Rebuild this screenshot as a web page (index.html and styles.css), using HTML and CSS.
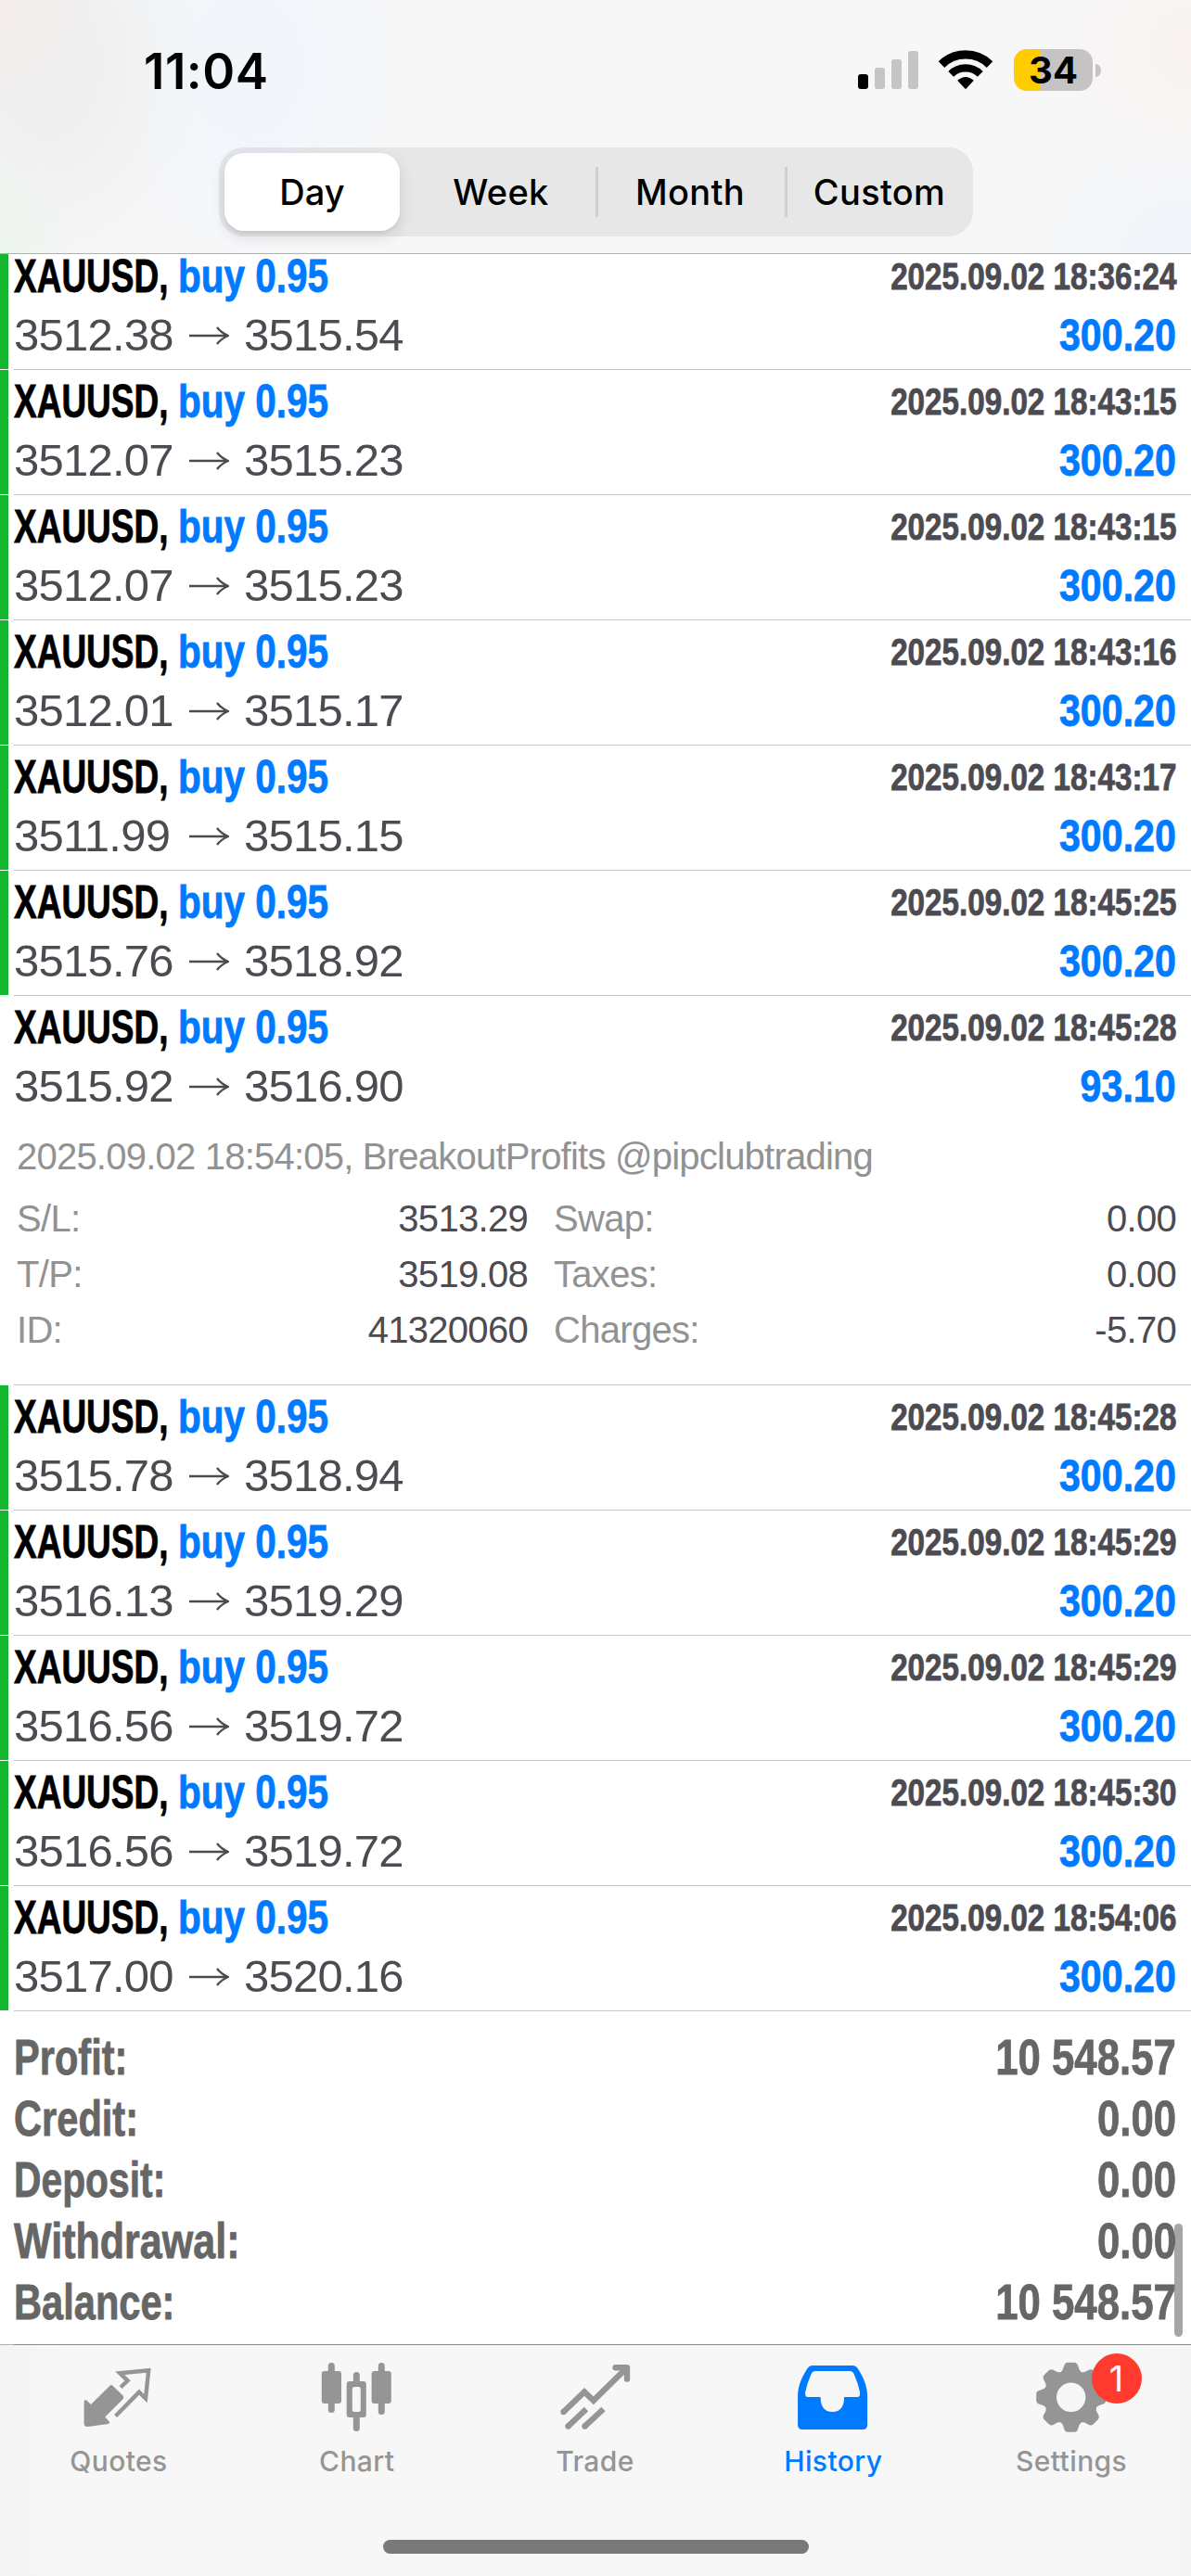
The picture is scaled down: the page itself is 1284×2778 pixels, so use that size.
FILE: index.html
```html
<!DOCTYPE html>
<html lang="en">
<head>
<meta charset="utf-8">
<title>History</title>
<link rel="stylesheet" href="styles.css">
</head>
<body>
<div class="app">
  <header class="header">
    <div class="status">
      <span class="time">11:04</span>
      <div class="status-icons">
        <svg class="signal" viewBox="0 0 65 41"><rect x="0" y="25" width="11" height="16" rx="3" fill="#000"/><g fill="#c5c5c5"><rect x="18" y="18" width="11" height="23" rx="3"/><rect x="36" y="9" width="11" height="32" rx="3"/><rect x="54" y="0" width="11" height="41" rx="3"/></g></svg>
        <svg class="wifi" viewBox="0 0 58 42"><g fill="none" stroke="#000"><path stroke-width="9.4" d="M3 15.6A37 37 0 0 1 55 15.6"/><path stroke-width="8.2" d="M13.2 25.8A22.4 22.4 0 0 1 44.8 25.8"/></g><path d="M20.2 32.8Q29 25.2 37.8 32.8L30 41.2Q29 42.2 28 41.2Z"/></svg>
        <div class="battery"><div class="cell">34</div><div class="tip"></div></div>
      </div>
    </div>
    <div class="segments">
      <div class="seg on">Day</div>
      <div class="seg">Week</div>
      <div class="seg div">Month</div>
      <div class="seg div">Custom</div>
    </div>
  </header>

  <main class="list">
    <div class="row first"><i class="bar"></i><div class="deal"><div class="line"><b class="sym">XAUUSD,</b><b class="side">buy 0.95</b><b class="date">2025.09.02 18:36:24</b></div><div class="line"><span class="price">3512.38</span><svg class="arrow" viewBox="0 0 43 20"><path d="M0 10H42M30 1Q34 6.500 42 10Q34 13.500 30 19"/></svg><span class="price">3515.54</span><b class="profit">300.20</b></div></div></div>
    <div class="row"><i class="bar"></i><div class="deal"><div class="line"><b class="sym">XAUUSD,</b><b class="side">buy 0.95</b><b class="date">2025.09.02 18:43:15</b></div><div class="line"><span class="price">3512.07</span><svg class="arrow" viewBox="0 0 43 20"><path d="M0 10H42M30 1Q34 6.500 42 10Q34 13.500 30 19"/></svg><span class="price">3515.23</span><b class="profit">300.20</b></div></div></div>
    <div class="row"><i class="bar"></i><div class="deal"><div class="line"><b class="sym">XAUUSD,</b><b class="side">buy 0.95</b><b class="date">2025.09.02 18:43:15</b></div><div class="line"><span class="price">3512.07</span><svg class="arrow" viewBox="0 0 43 20"><path d="M0 10H42M30 1Q34 6.500 42 10Q34 13.500 30 19"/></svg><span class="price">3515.23</span><b class="profit">300.20</b></div></div></div>
    <div class="row"><i class="bar"></i><div class="deal"><div class="line"><b class="sym">XAUUSD,</b><b class="side">buy 0.95</b><b class="date">2025.09.02 18:43:16</b></div><div class="line"><span class="price">3512.01</span><svg class="arrow" viewBox="0 0 43 20"><path d="M0 10H42M30 1Q34 6.500 42 10Q34 13.500 30 19"/></svg><span class="price">3515.17</span><b class="profit">300.20</b></div></div></div>
    <div class="row"><i class="bar"></i><div class="deal"><div class="line"><b class="sym">XAUUSD,</b><b class="side">buy 0.95</b><b class="date">2025.09.02 18:43:17</b></div><div class="line"><span class="price">3511.99</span><svg class="arrow" viewBox="0 0 43 20"><path d="M0 10H42M30 1Q34 6.500 42 10Q34 13.500 30 19"/></svg><span class="price">3515.15</span><b class="profit">300.20</b></div></div></div>
    <div class="row"><i class="bar"></i><div class="deal"><div class="line"><b class="sym">XAUUSD,</b><b class="side">buy 0.95</b><b class="date">2025.09.02 18:45:25</b></div><div class="line"><span class="price">3515.76</span><svg class="arrow" viewBox="0 0 43 20"><path d="M0 10H42M30 1Q34 6.500 42 10Q34 13.500 30 19"/></svg><span class="price">3518.92</span><b class="profit">300.20</b></div></div></div>
    <div class="row open"><i class="bar none"></i><div class="deal"><div class="line"><b class="sym">XAUUSD,</b><b class="side">buy 0.95</b><b class="date">2025.09.02 18:45:28</b></div><div class="line"><span class="price">3515.92</span><svg class="arrow" viewBox="0 0 43 20"><path d="M0 10H42M30 1Q34 6.500 42 10Q34 13.500 30 19"/></svg><span class="price">3516.90</span><b class="profit">93.10</b></div>
      <div class="comment">2025.09.02 18:54:05, BreakoutProfits @pipclubtrading</div>
      <div class="facts">
        <span>S/L:</span><em>3513.29</em><span>Swap:</span><em>0.00</em>
        <span>T/P:</span><em>3519.08</em><span>Taxes:</span><em>0.00</em>
        <span>ID:</span><em>41320060</em><span>Charges:</span><em>-5.70</em>
      </div></div></div>
    <div class="row"><i class="bar"></i><div class="deal"><div class="line"><b class="sym">XAUUSD,</b><b class="side">buy 0.95</b><b class="date">2025.09.02 18:45:28</b></div><div class="line"><span class="price">3515.78</span><svg class="arrow" viewBox="0 0 43 20"><path d="M0 10H42M30 1Q34 6.500 42 10Q34 13.500 30 19"/></svg><span class="price">3518.94</span><b class="profit">300.20</b></div></div></div>
    <div class="row"><i class="bar"></i><div class="deal"><div class="line"><b class="sym">XAUUSD,</b><b class="side">buy 0.95</b><b class="date">2025.09.02 18:45:29</b></div><div class="line"><span class="price">3516.13</span><svg class="arrow" viewBox="0 0 43 20"><path d="M0 10H42M30 1Q34 6.500 42 10Q34 13.500 30 19"/></svg><span class="price">3519.29</span><b class="profit">300.20</b></div></div></div>
    <div class="row"><i class="bar"></i><div class="deal"><div class="line"><b class="sym">XAUUSD,</b><b class="side">buy 0.95</b><b class="date">2025.09.02 18:45:29</b></div><div class="line"><span class="price">3516.56</span><svg class="arrow" viewBox="0 0 43 20"><path d="M0 10H42M30 1Q34 6.500 42 10Q34 13.500 30 19"/></svg><span class="price">3519.72</span><b class="profit">300.20</b></div></div></div>
    <div class="row"><i class="bar"></i><div class="deal"><div class="line"><b class="sym">XAUUSD,</b><b class="side">buy 0.95</b><b class="date">2025.09.02 18:45:30</b></div><div class="line"><span class="price">3516.56</span><svg class="arrow" viewBox="0 0 43 20"><path d="M0 10H42M30 1Q34 6.500 42 10Q34 13.500 30 19"/></svg><span class="price">3519.72</span><b class="profit">300.20</b></div></div></div>
    <div class="row"><i class="bar"></i><div class="deal"><div class="line"><b class="sym">XAUUSD,</b><b class="side">buy 0.95</b><b class="date">2025.09.02 18:54:06</b></div><div class="line"><span class="price">3517.00</span><svg class="arrow" viewBox="0 0 43 20"><path d="M0 10H42M30 1Q34 6.500 42 10Q34 13.500 30 19"/></svg><span class="price">3520.16</span><b class="profit">300.20</b></div></div></div>

    <div class="summary">
      <div class="total"><b>Profit:</b><b>10 548.57</b></div>
      <div class="total"><b>Credit:</b><b>0.00</b></div>
      <div class="total"><b>Deposit:</b><b>0.00</b></div>
      <div class="total"><b>Withdrawal:</b><b>0.00</b></div>
      <div class="total"><b>Balance:</b><b>10 548.57</b></div>
    </div>
    <div class="scrollbar"></div>
  </main>

  <footer class="footer">
    <div class="rule"></div>
    <nav class="tabs">
      <div class="tab">
        <svg class="icon" viewBox="83.400 2540 90 90"><path fill="none" stroke="currentColor" stroke-width="4.400" d="M130.500 2574.500L138 2567.300L129.600 2559.200L160.600 2556.300L157.400 2586.500L150.400 2579.700L125 2605.500"/><path fill="currentColor" d="M118.600 2573Q120.400 2571.200 122.200 2573L133 2583.600Q134.400 2585.400 133 2587.200L113.600 2606.600L118.200 2611.600Q119.200 2613.400 117 2614L95 2617Q91 2617.200 91 2613.600V2590Q91.400 2586.600 94 2588.800L98.400 2593Z"/></svg>
        <span>Quotes</span>
      </div>
      <div class="tab">
        <svg class="icon" viewBox="340.200 2540 90 90" fill="currentColor"><rect x="347" y="2557" width="21.200" height="35" rx="3"/><rect x="354" y="2548" width="7" height="54" rx="3.500"/><rect x="400.800" y="2557" width="21.200" height="35" rx="3"/><rect x="408" y="2548" width="7" height="56" rx="3.500"/><rect x="381" y="2558" width="7" height="12" rx="3.500"/><rect x="381" y="2604" width="7" height="18" rx="3.500"/><path fill-rule="evenodd" d="M376.900 2568H392Q395 2568 395 2571V2604Q395 2607 392 2607H376.900Q373.900 2607 373.900 2604V2571Q373.900 2568 376.900 2568ZM382.500 2574Q380 2574 380 2576.500V2598.500Q380 2601 382.500 2601H386.500Q389 2601 389 2598.500V2576.500Q389 2574 386.500 2574Z"/></svg>
        <span>Chart</span>
      </div>
      <div class="tab">
        <svg class="icon" viewBox="597 2540 90 90" fill="none" stroke="currentColor" stroke-width="6.400"><path stroke-linecap="round" stroke-linejoin="round" d="M663.500 2553.300H676V2565.500"/><path d="M607.500 2601L630 2579.500L639.800 2588.800L675.500 2553.800"/><path d="M612.500 2616.500L632 2598M630.500 2616.500L650.500 2598"/><g fill="currentColor" stroke="none"><circle cx="607.500" cy="2601" r="3.200"/><circle cx="612.500" cy="2616.500" r="3.200"/><circle cx="630.500" cy="2616.500" r="3.200"/></g></svg>
        <span>Trade</span>
      </div>
      <div class="tab active">
        <svg class="icon" viewBox="853.900 2540 90 90"><path fill="currentColor" fill-rule="evenodd" d="M876 2551H919Q922.500 2551 924.500 2554C930.500 2563 935 2573 935 2584V2615Q935 2620 930 2620H865Q860 2620 860 2615V2584C860 2573 864.500 2563 870.500 2554Q872.500 2551 876 2551ZM879 2557Q876 2557 874.500 2560Q870 2570 868 2580Q867.500 2585 871 2585H884.500C884.500 2595 888.500 2601 897.300 2601S910 2595 910 2585H924Q927.500 2585 927 2580Q925 2570 920.500 2560Q919 2557 916 2557Z"/></svg>
        <span>History</span>
      </div>
      <div class="tab">
        <div class="badged">
          <svg class="icon" viewBox="-43.700 -45.300 90 90"><defs><path id="tooth" d="M-12 -26Q-8.500 -29 -7.800 -33Q-6.800 -37.500 -3.500 -37.500H3.500Q6.800 -37.500 7.800 -33Q8.500 -29 12 -26Z"/></defs><circle r="22.500" fill="none" stroke="currentColor" stroke-width="13.600"/><g fill="currentColor"><use href="#tooth"/><use href="#tooth" transform="rotate(45)"/><use href="#tooth" transform="rotate(90)"/><use href="#tooth" transform="rotate(135)"/><use href="#tooth" transform="rotate(180)"/><use href="#tooth" transform="rotate(225)"/><use href="#tooth" transform="rotate(270)"/><use href="#tooth" transform="rotate(315)"/></g></svg>
          <div class="badge">1</div>
        </div>
        <span>Settings</span>
      </div>
    </nav>
    <div class="home"></div>
  </footer>
</div>
</body>
</html>
```
FILE: styles.css
```css
* { box-sizing: border-box; }
body { margin: 0; background: #fff; font-family: "Liberation Sans", Arial, sans-serif; }
.app { width: 1284px; height: 2778px; display: flex; flex-direction: column; overflow: hidden; }

.header {
  height: 274px;
  flex: none;
  border-bottom: 1px solid #b0b0b2;
  font-family: Inter, sans-serif;
  color: #000;
  background:
    radial-gradient(ellipse 110px 130px at 0 0, #f3edeb, rgba(243,237,235,0)),
    radial-gradient(ellipse 90px 130px at 0 100%, #edf5ee, rgba(237,245,238,0)),
    radial-gradient(ellipse 170px 230px at 50px 70px, #efefef 30%, rgba(239,239,239,0)),
    radial-gradient(ellipse 190px 240px at 265px 70px, #f2f6fb 30%, rgba(242,246,251,0)),
    radial-gradient(ellipse 150px 150px at 100% 50px, #f9f3f1, rgba(249,243,241,0)),
    radial-gradient(ellipse 190px 150px at 100% 100%, #f0f4fb, rgba(240,244,251,0)),
    #f7f7f7;
}
.status { height: 159px; padding: 0 97px 0 155px; display: flex; justify-content: space-between; }
.time { font-size: 53px; font-weight: 600; line-height: 64px; margin-top: 45px; letter-spacing: .5px; }
.status-icons { display: flex; align-items: flex-start; padding-top: 53px; }
.signal { width: 65px; height: 41px; margin: 2px 22px 0 0; }
.wifi { width: 58px; height: 42px; margin: 1px 23px 0 0; }
.battery { display: flex; align-items: center; gap: 3px; }
.cell {
  width: 85px; height: 45px; border-radius: 14px;
  background: linear-gradient(90deg, #fc0 29px, #c5c3c3 29px);
  font-size: 40px; font-weight: 700; line-height: 45px; text-align: center;
}
.tip { width: 6px; height: 14px; border-radius: 0 6px 6px 0 / 0 7px 7px 0; background: #c5c3c3; }

.segments {
  width: 813px; height: 96px; margin-left: 236px; padding: 6px 0 6px 6px;
  display: flex; border-radius: 27px; background: rgba(118,118,128,.125);
}
.seg {
  flex: 0 0 204px; text-align: center;
  font-size: 38px; font-weight: 450; line-height: 84px; letter-spacing: .3px;
}
.seg.on { flex: 0 0 189px; margin-right: 7px; border-radius: 21px; background: #fff; font-weight: 500; box-shadow: 0 6px 16px rgba(0,0,0,.12), 0 3px 3px rgba(0,0,0,.04); letter-spacing: 0; }
.seg.div { background: linear-gradient(#cfcfd1, #cfcfd1) 0 15px / 3px 54px no-repeat; }

.list { flex: none; height: 2254px; position: relative; }
.row { height: 135px; display: flex; gap: 6px; }
.row.first { height: 125px; }
.row.first .deal { padding-top: 0; margin-top: -7px; }
.row.open { height: 420px; }
.bar { width: 9px; flex: none; margin-bottom: 1px; background: #15b62f; }
.bar.none { background: none; }
.deal { flex: 1; padding: 3px 16px 0 0; border-bottom: 1px solid #c6c6c8; }
.line { height: 63px; display: flex; align-items: center; line-height: 63px; white-space: nowrap; color: #4c4b51; }
.sym, .side, .date, .profit, .total b { -webkit-text-stroke: .8px currentColor; }
.sym { width: 177px; font-size: 50px; color: #000; transform: scaleX(.74); transform-origin: 0 50%; }
.side { font-size: 50px; color: #007aff; transform: scaleX(.81); transform-origin: 0 50%; }
.date { margin-left: auto; font-size: 40px; transform: scaleX(.83); transform-origin: 100% 50%; }
.price { font-size: 49px; letter-spacing: -.75px; width: 174px; }
.arrow { width: 43px; height: 20px; margin: 0 16px 0 15px; fill: none; stroke: #4c4b51; stroke-width: 2.3; }
.profit { margin-left: auto; font-size: 49px; color: #007aff; transform: scaleX(.84); transform-origin: 100% 50%; }
.comment { margin: 14px 0 7px 3px; font-size: 40px; line-height: 60px; letter-spacing: -.78px; color: #929292; white-space: nowrap; }
.facts {
  display: grid; grid-template-columns: 130px 421px 200px 1fr;
  margin-left: 3px; font-size: 40px; line-height: 60px; letter-spacing: -.7px; color: #929292;
}
.facts span:nth-of-type(even) { padding-left: 28px; }
.facts em { font-style: normal; text-align: right; color: #4c4b51; }

.summary { padding: 17px 16px 0 15px; }
.total { height: 66px; display: flex; justify-content: space-between; font-size: 53px; line-height: 66px; color: #666; }
.total b:first-child { transform: scaleX(.785); transform-origin: 0 50%; }
.total:nth-child(3) b:first-child { transform: scaleX(.77); }
.total:nth-child(4) b:first-child { transform: scaleX(.812); }
.total b:last-child { transform: scaleX(.825); transform-origin: 100% 50%; }
.scrollbar { position: absolute; right: 9px; bottom: 8px; width: 9px; height: 122px; border-radius: 5px; background: rgba(0,0,0,.35); }

.footer { flex: 1; background: linear-gradient(90deg, #f4f4f4, #f7f7f7 90px, #f7f7f7 1200px, #f5f5f5); font-family: Inter, sans-serif; }
.rule { height: 1px; background: linear-gradient(90deg, #b0b0b0 15px, #8b8b8b 15px); }
.tabs { display: grid; grid-template-columns: repeat(5, 1fr); padding-top: 11px; height: 210px; }
.tab { display: flex; flex-direction: column; align-items: center; color: #959595; font-size: 30px; font-weight: 500; line-height: 36px; letter-spacing: .4px; }
.tab > span { margin: 6px 1px 0 0; }
.tab.active { color: #007aff; }
.icon { width: 90px; height: 90px; display: block; }
.badged { position: relative; }
.badge {
  position: absolute; left: 66px; top: -2px; width: 54px; height: 54px; border-radius: 50%;
  background: #ff3b30; color: #fff; font-size: 38px; font-weight: 400; line-height: 54px; text-align: center; letter-spacing: 0;
}
.home { width: 459px; height: 15px; margin: 0 auto; border-radius: 8px; background: #797979; }
```
